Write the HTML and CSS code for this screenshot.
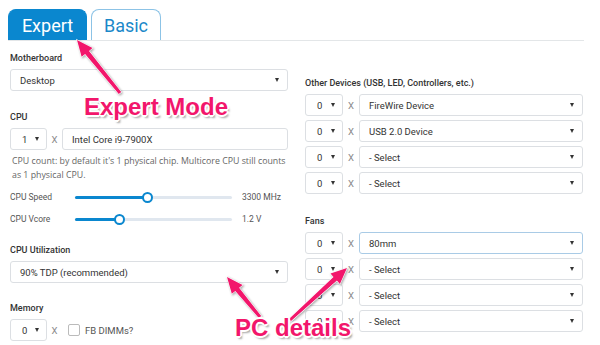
FILE: index.html
```html
<!DOCTYPE html>
<html lang="en">
<head>
    <meta charset="UTF-8">
    <title>PC Power Calculator</title>
    <link rel="stylesheet" href="styles.css">
</head>
<body>
<div class="page">
    <nav class="tabs">
        <a class="tab active">Expert</a>
        <a class="tab">Basic</a>
    </nav>

    <div class="cols">
        <div class="col">
            <div class="field">
                <label>Motherboard</label>
                <div class="select">Desktop</div>
            </div>

            <div class="field cpu">
                <label>CPU</label>
                <div class="row">
                    <div class="select small">1</div>
                    <span class="x">X</span>
                    <div class="input">Intel Core i9-7900X</div>
                </div>
                <p class="help">CPU count: by default it's 1 physical chip. Multicore CPU still counts as 1 physical CPU.</p>
                <div class="sliders">
                    <div class="slider">
                        <span class="slider-label">CPU Speed</span>
                        <div class="track"><div class="fill" style="width: 72px"></div><div class="thumb" style="left: 72px"></div></div>
                        <span class="slider-value">3300 MHz</span>
                    </div>
                    <div class="slider">
                        <span class="slider-label">CPU Vcore</span>
                        <div class="track"><div class="fill" style="width: 44px"></div><div class="thumb" style="left: 44px"></div></div>
                        <span class="slider-value">1.2 V</span>
                    </div>
                </div>
            </div>

            <div class="field util">
                <label>CPU Utilization</label>
                <div class="select">90% TDP (recommended)</div>
            </div>

            <div class="field memory">
                <label>Memory</label>
                <div class="row">
                    <div class="select small">0</div>
                    <span class="x">X</span>
                    <span class="checkbox"></span>
                    <span class="check-label">FB DIMMs?</span>
                </div>
            </div>
        </div>

        <div class="col right">
            <div class="field">
                <label>Other Devices (USB, LED, Controllers, etc.)</label>
                <div class="rows">
                    <div class="row"><div class="select small">0</div><span class="x">X</span><div class="select">FireWire Device</div></div>
                    <div class="row"><div class="select small">0</div><span class="x">X</span><div class="select">USB 2.0 Device</div></div>
                    <div class="row"><div class="select small">0</div><span class="x">X</span><div class="select">- Select</div></div>
                    <div class="row"><div class="select small">0</div><span class="x">X</span><div class="select">- Select</div></div>
                </div>
            </div>

            <div class="field fans">
                <label>Fans</label>
                <div class="rows">
                    <div class="row"><div class="select small">0</div><span class="x">X</span><div class="select focus">80mm</div></div>
                    <div class="row"><div class="select small">0</div><span class="x">X</span><div class="select">- Select</div></div>
                    <div class="row"><div class="select small">0</div><span class="x">X</span><div class="select">- Select</div></div>
                    <div class="row"><div class="select small">0</div><span class="x">X</span><div class="select">- Select</div></div>
                </div>
            </div>
        </div>
    </div>

    <!-- annotation layer -->
    <svg class="arrows" width="600" height="345" viewBox="0 0 600 345">
        <polygon points="77,40 92.5,48 89,50.9 121.2,92.1 118.8,94 85.1,54 81.6,56.8"/>
        <polygon points="227,277 242.6,284.9 239.1,287.8 261.2,316.1 258.8,318 235.3,290.9 231.8,293.8"/>
        <polygon points="347,268 339.9,284 336.9,280.6 291,321.1 289,318.9 333.5,276.9 330.5,273.6"/>
    </svg>
    <div class="note note-expert">Expert Mode</div>
    <div class="note note-pc">PC details</div>
</div>
</body>
</html>
```

FILE: styles.css
```css
body {
    margin: 0;
    background: #fff;
    font-family: Roboto, "Liberation Sans", sans-serif;
    color: #333;
}
.page {
    position: relative;
    width: 600px;
    height: 345px;
    overflow: hidden;
}
.tabs {
    display: flex;
    gap: 4px;
    margin: 9px 16px 0 8px;
    border-bottom: 1px solid #e3e6e8;
}
.tab {
    box-sizing: border-box;
    height: 31px;
    width: 70px;
    display: flex;
    align-items: center;
    justify-content: center;
    font-size: 18px;
    color: #1b88c9;
    border: 1px solid #8cc3e6;
    border-bottom: none;
    border-radius: 8px 8px 0 0;
}
.tab.active {
    width: 79px;
    background: #0a87cf;
    border-color: #0a87cf;
    color: #fff;
}
.cols {
    display: grid;
    grid-template-columns: 278px 278px;
    gap: 17px;
    padding: 10px 0 0 10px;
}
.col.right {
    padding-top: 25px;
}
.field label {
    display: block;
    font-size: 9px;
    font-weight: 500;
    line-height: 14px;
    margin-bottom: 4px;
    color: #333;
}
.field.cpu {
    margin-top: 19px;
}
.field.util {
    margin-top: 13px;
}
.field.memory {
    margin-top: 18px;
}
.field.fans {
    margin-top: 20px;
}
.row {
    display: flex;
    align-items: center;
}
.rows {
    display: flex;
    flex-direction: column;
    gap: 4px;
}
.select, .input {
    box-sizing: border-box;
    flex: 1;
    height: 22px;
    display: flex;
    align-items: center;
    justify-content: space-between;
    padding: 0 8px 0 9px;
    border: 1px solid #dcdfe3;
    border-radius: 3px;
    font-size: 9.5px;
    color: #333;
}
.select::after {
    content: "";
    border-left: 2.5px solid transparent;
    border-right: 2.5px solid transparent;
    border-top: 4px solid #333;
}
.select.small {
    flex: 0 0 37px;
    padding-left: 11px;
    padding-right: 7px;
}
.right .select.small {
    flex-basis: 38px;
}
.select.focus {
    border-color: #a9cbe6;
}
.x {
    width: 15px;
    text-align: center;
    font-size: 9.5px;
    color: #888;
}
.right .x {
    width: 16px;
}
.help {
    margin: 4px -8px 0 2px;
    font-family: "Open Sans", Roboto, sans-serif;
    font-size: 8.8px;
    line-height: 14px;
    color: #666;
}
.sliders {
    margin-top: 4px;
}
.slider {
    display: flex;
    align-items: center;
    height: 22px;
    font-size: 8.5px;
    color: #555;
}
.slider-label {
    width: 65px;
}
.track {
    position: relative;
    width: 157px;
    height: 3px;
    background: #e0e7ef;
    border-radius: 2px;
}
.fill {
    height: 3px;
    background: #0a87cf;
    border-radius: 2px;
}
.thumb {
    position: absolute;
    top: -4px;
    width: 7px;
    height: 7px;
    margin-left: -5px;
    border: 2px solid #0a87cf;
    border-radius: 50%;
    background: #fff;
}
.slider-value {
    margin-left: 10px;
}
.checkbox {
    box-sizing: border-box;
    width: 12px;
    height: 12px;
    margin-left: 6px;
    border: 1px solid #bbb;
    border-radius: 2px;
}
.check-label {
    margin-left: 5px;
    font-size: 9.5px;
    color: #555;
}
.arrows {
    position: absolute;
    top: 0;
    left: 0;
    fill: #f2166b;
    stroke: #fff;
    stroke-width: 1.2;
    paint-order: stroke;
    filter: drop-shadow(1px 1px 1px rgba(0, 0, 0, 0.35));
}
.note {
    position: absolute;
    font-family: "Liberation Sans", Arial, sans-serif;
    font-weight: bold;
    font-size: 24px;
    line-height: 24px;
    color: #f2166b;
    white-space: nowrap;
    text-shadow: -1px -1px 0 #fff, 1px -1px 0 #fff, -1px 1px 0 #fff, 1px 1px 0 #fff,
                 0 -2px 0 #fff, 0 2px 0 #fff, -2px 0 0 #fff, 2px 0 0 #fff,
                 2px 3px 2px rgba(0, 0, 0, 0.35);
}
.note-expert {
    left: 84px;
    top: 95px;
}
.note-pc {
    left: 235px;
    top: 316px;
}
```
